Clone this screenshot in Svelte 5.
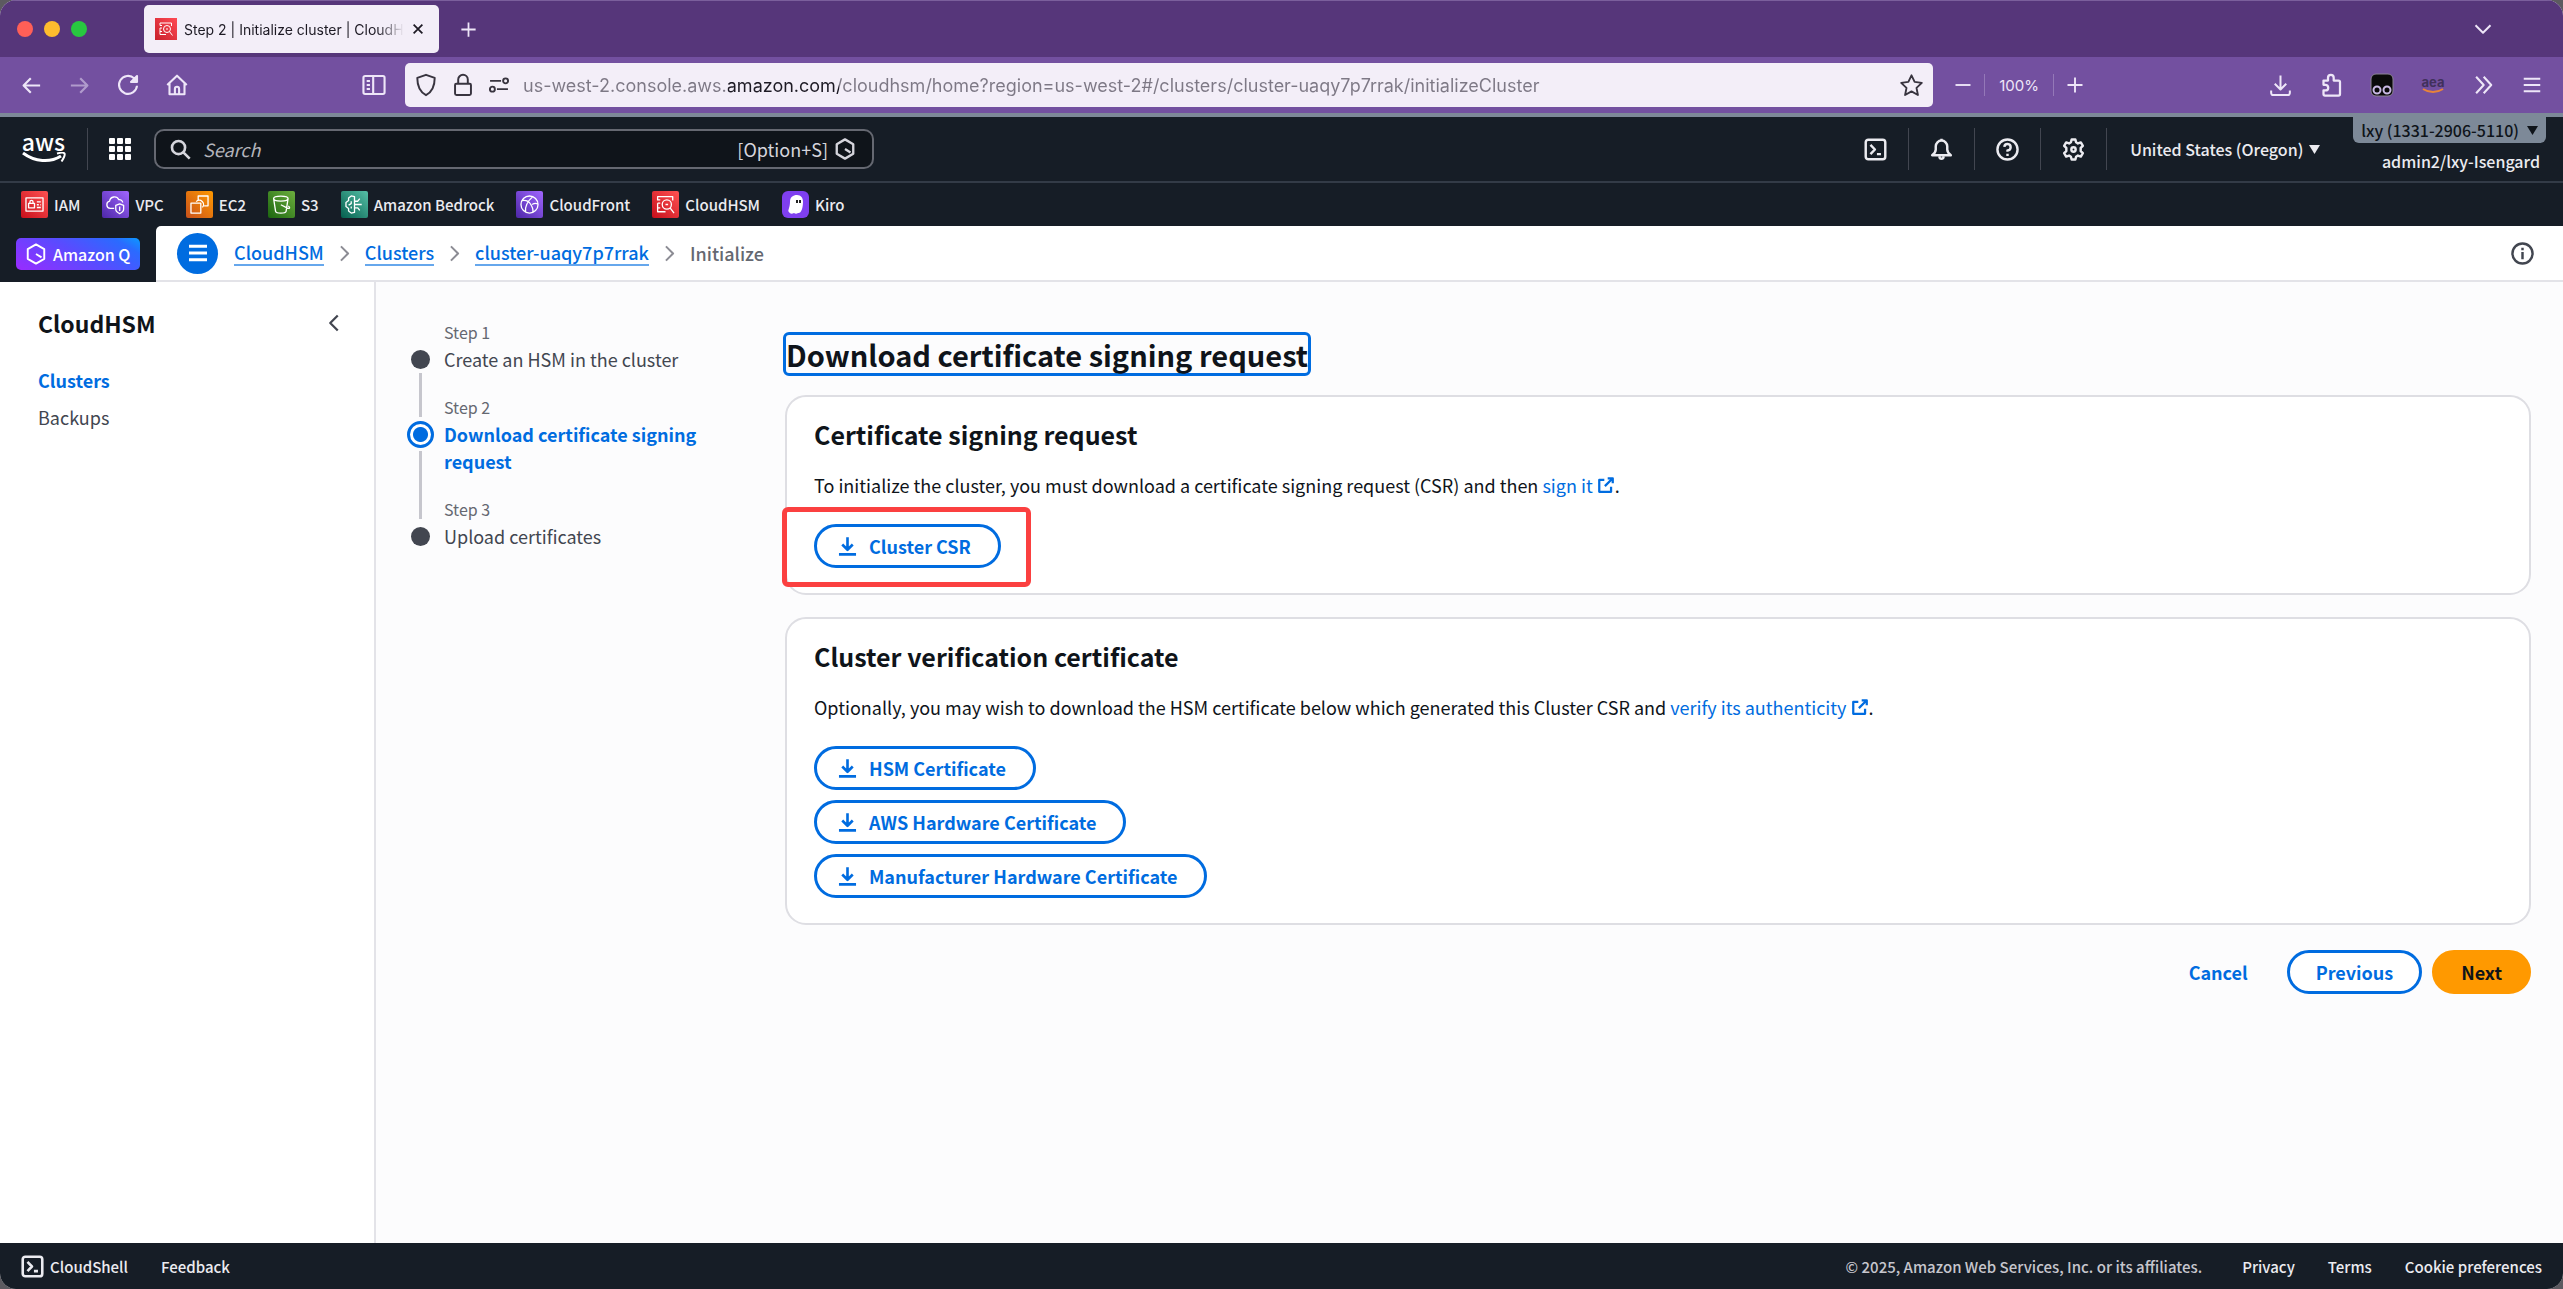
<script lang="ts">
	let address = $state(
		'us-west-2.console.aws.amazon.com/cloudhsm/home?region=us-west-2#/clusters/cluster-uaqy7p7rrak/initializeCluster'
	);
	let query = $state('');

	// 16x16 stroke icons
	const icons: Record<string, string> = {
		close: 'M3 3l10 10M13 3L3 13',
		plus: 'M8 2v12M2 8h12',
		minus: 'M2 8h12',
		chevronDown: 'M3 5.5l5 5 5-5',
		chevronRight: 'M5 2l6 6-6 6',
		chevronLeft: 'M11 2L5 8l6 6',
		back: 'M14 8H2.5M7.5 3l-5 5 5 5',
		forward: 'M2 8h11.5M8.5 3l5 5-5 5',
		reload: 'M14 8.5A6 6 0 1 1 12.2 3.6l1.4 1.2M14 2v4h-4zM13 3.5v1.8h-1.5',
		home: 'M1.5 8L8 1.8 14.5 8M3 7v7.2h10V7M6.6 14v-3.4a1.4 1.4 0 0 1 2.8 0V14',
		sidebar: 'M2.5 2.5h11a1 1 0 0 1 1 1v9a1 1 0 0 1-1 1h-11a1 1 0 0 1-1-1v-9a1 1 0 0 1 1-1zM7.5 2.5v11M3.5 5.5h2M3.5 8h2M3.5 10.5h2',
		shield: 'M8 1.2l5.8 2.1c0 5.2-1.6 9.2-5.8 11.5C3.8 12.5 2.2 8.5 2.2 3.3z',
		lock: 'M3.5 7.2h9a.8.8 0 0 1 .8.8v5.6a1 1 0 0 1-1 1H3.7a1 1 0 0 1-1-1V8a.8.8 0 0 1 .8-.8zM4.8 7V4.4a3.2 3.2 0 0 1 6.4 0V7',
		tune: 'M1.5 5h8M12.8 6.8a1.8 1.8 0 1 0 0-3.6 1.8 1.8 0 0 0 0 3.6zM14.5 11h-8M3.2 12.8a1.8 1.8 0 1 0 0-3.6 1.8 1.8 0 0 0 0 3.6z',
		star: 'M8 1.5l2 4.2 4.6.6-3.4 3.2.9 4.6L8 11.8l-4.1 2.3.9-4.6L1.4 6.3 6 5.7z',
		tray: 'M8 1v9.5M4 6.8l4 4 4-4M1.5 11.5v1.8a1.3 1.3 0 0 0 1.3 1.3h10.4a1.3 1.3 0 0 0 1.3-1.3v-1.8',
		puzzle: 'M3 5h3V3.2a1.9 1.9 0 0 1 3.8 0V5H13a1 1 0 0 1 1 1v8a1 1 0 0 1-1 1H4a1 1 0 0 1-1-1v-2.4h1.3a1.8 1.8 0 0 0 0-3.7H3z',
		more: 'M3 2l5.5 6L3 14M8.5 2L14 8l-5.5 6',
		menu: 'M2 3.5h12M2 8h12M2 12.5h12',
		search: 'M6.5 11.5a5 5 0 1 0 0-10 5 5 0 0 0 0 10zM10.2 10.2L15 15',
		hexagon: 'M8 1l6 3.5v7L8 15l-6-3.5v-7zM8 8l4 2.5',
		shell: 'M3 1.2h10A1.8 1.8 0 0 1 14.8 3v10a1.8 1.8 0 0 1-1.8 1.8H3A1.8 1.8 0 0 1 1.2 13V3A1.8 1.8 0 0 1 3 1.2zM4.5 4.8L7.6 8l-3.1 3.2M9 11.2h2.8',
		bell: 'M1.5 12h13c-1.6-1.2-2.5-2.300-2.500-4V5.800a4 4 0 0 0-8 0V8c0 1.700-.9 2.800-2.500 4zM8 1.800V.5M6.500 13c.3 2 2.700 2 3 0',
		help: 'M8 15A7 7 0 1 0 8 1a7 7 0 0 0 0 14zM5.8 6.2A2.2 2.2 0 1 1 8 8.6v1M8 11v1.5',
		gear: 'M6.7 1h2.6l.5 2 1.3.8 2-.7 1.4 2.3L13 6.9v2.2l1.5 1.5-1.4 2.3-2-.7-1.3.8-.5 2H6.7l-.5-2-1.3-.8-2 .7-1.4-2.3L3 9.1V6.9L1.5 5.4l1.4-2.3 2 .7L6.2 3zM8 9.500a1.500 1.500 0 1 0 0-3 1.500 1.500 0 0 0 0 3z',
		info: 'M8 15A7 7 0 1 0 8 1a7 7 0 0 0 0 14zM8 7v5M8 4v1.7',
		download: 'M8 1v9M4 6.5l4 4 4-4M1.5 14h13',
		external: 'M9.5 2H14v4.5M14 2L7 9M6.5 3.5H2V14h10.5V9.5',
		iam: 'M1.5 3h13v10h-13zM6 10.5H3.5V7.2H8v3.3H6M4.5 7V6a1.2 1.2 0 0 1 2.4 0v1M9.8 6h3M9.8 8.2h1.5M12.5 8.2h.5M9.8 10.3h3',
		vpc: 'M7 11H4a2.8 2.8 0 0 1-.5-5.5 3.7 3.7 0 0 1 7-1.2 2.6 2.6 0 0 1 3 2.2M11.2 7.5l3 1.2v3c0 1.5-1.5 2.6-3 3.3-1.5-.7-3-1.8-3-3.3v-3zM11.2 9.5V13',
		ec2: 'M1.5 7H9v7.5H1.5zM7 4.5v-3h7.5V9h-3M5.5 5.8a3.2 3.2 0 1 1 4.7 4.4',
		s3: 'M2 3.5c0-2.6 11-2.6 11 0s-11 2.6-11 0zM2 3.5l1.5 9.7c.5 1.8 7.5 1.8 8 0L13 3.5M7.5 8.2l5 2.5c1.5.6 2.5-.2.7-1.5',
		bedrock: 'M8 2l-2.5-.5-2 1.5v2l-2 1.5v3l2 1.5v2l2 1.5L8 14zM8 5.5h2.5l1.5-2M8 8h5.5M8 10.5h2.5l1.5 2M5.5 5.5v1.8l-2 1.2M5.5 11V9.5',
		cloudfront: 'M8 14.5a6.5 6.5 0 1 0 0-13 6.5 6.5 0 0 0 0 13zM2.5 5c3-.5 5 .5 6.5 3s2 4 1.5 6M5 13.5C4.5 9.5 6 6 10.5 2M10 8c1.5-1 3-1 4.3-.5',
		hsm: 'M13.5 5V2H2v2.5h2M2 7v6.5h6M2 7h2M9 11.5a3.5 3.5 0 1 0 0-7 3.5 3.5 0 0 0 0 7zM8 8h2M11.5 10.5l3 4M2 10.5h2'
	};

	const services = [
		{ name: 'IAM', icon: 'iam', tone: 'red' },
		{ name: 'VPC', icon: 'vpc', tone: 'purple' },
		{ name: 'EC2', icon: 'ec2', tone: 'orange' },
		{ name: 'S3', icon: 's3', tone: 'green' },
		{ name: 'Amazon Bedrock', icon: 'bedrock', tone: 'teal' },
		{ name: 'CloudFront', icon: 'cloudfront', tone: 'purple' },
		{ name: 'CloudHSM', icon: 'hsm', tone: 'red' },
		{ name: 'Kiro', icon: 'ghost', tone: 'kiro' }
	];

	const crumbs = ['CloudHSM', 'Clusters', 'cluster-uaqy7p7rrak'];

	const steps = ['Create an HSM in the cluster', 'Download certificate signing request', 'Upload certificates'];
	const current = 1;

	const certificates = ['HSM Certificate', 'AWS Hardware Certificate', 'Manufacturer Hardware Certificate'];
</script>

{#snippet icon(name: string, size = 22, weight = 2)}
	<svg
		class="icon"
		width={size}
		height={size}
		viewBox="0 0 16 16"
		fill="none"
		stroke="currentColor"
		stroke-width={weight}
		stroke-linejoin="round"
		aria-hidden="true"
	>
		<path d={icons[name]} />
	</svg>
{/snippet}

{#snippet caret()}
	<svg class="icon" width="11" height="11" viewBox="0 0 11 11" aria-hidden="true"><path d="M0 1h11L5.5 10z" fill="currentColor" /></svg>
{/snippet}

<div class="window">
	<header class="browser">
		<div class="tabs">
			<div class="lights"><i class="stop"></i><i class="hide"></i><i class="grow"></i></div>
			<div class="tab">
				<span class="favicon">{@render icon('hsm', 16, 1)}</span>
				<span class="tab-title">Step 2 | Initialize cluster | CloudH</span>
				<button aria-label="Close tab">{@render icon('close', 14, 2)}</button>
			</div>
			<button aria-label="New tab">{@render icon('plus', 19, 1.5)}</button>
			<button class="all-tabs" aria-label="List all tabs">{@render icon('chevronDown', 24, 1.3)}</button>
		</div>
		<div class="toolbar">
			<div class="history">
				<button aria-label="Back">{@render icon('back', 23, 1.5)}</button>
				<button class="faded" aria-label="Forward">{@render icon('forward', 23, 1.5)}</button>
				<button aria-label="Reload">{@render icon('reload', 24, 1.4)}</button>
				<button aria-label="Home">{@render icon('home', 24, 1.4)}</button>
			</div>
			<button aria-label="Sidebar">{@render icon('sidebar', 26, 1.3)}</button>
			<div class="address">
				{@render icon('shield', 24, 1.3)}
				{@render icon('lock', 24, 1.3)}
				{@render icon('tune', 22, 1.4)}
				<input type="text" aria-label="Address" bind:value={address} />
				<button aria-label="Bookmark">{@render icon('star', 25, 1.2)}</button>
			</div>
			<div class="zoom">
				<button aria-label="Zoom out">{@render icon('minus', 20, 1.5)}</button>
				<button class="zoom-level">100%</button>
				<button aria-label="Zoom in">{@render icon('plus', 20, 1.5)}</button>
			</div>
			<div class="extensions">
				<button aria-label="Downloads">{@render icon('tray', 23, 1.4)}</button>
				<button aria-label="Extensions">{@render icon('puzzle', 24, 1.5)}</button>
				<button aria-label="Tampermonkey">
					<svg class="icon" width="24" height="24" viewBox="0 0 24 24">
						<rect x="1" y="1" width="22" height="22" rx="5" fill="#0a0a0a" stroke="#8c8494" />
						<circle cx="7" cy="17" r="3.5" fill="#0a0a0a" stroke="#c9b9e4" stroke-width="2" />
						<circle cx="17" cy="17" r="3.5" fill="#0a0a0a" stroke="#c9b9e4" stroke-width="2" />
					</svg>
				</button>
				<button class="aea" aria-label="aea">
					<span>aea</span>
					<svg width="22" height="6" viewBox="0 0 22 6"><path d="M1 1c6 4 14 4 20 0" fill="none" stroke="#e8833a" stroke-width="2" /></svg>
				</button>
				<button aria-label="More tools">{@render icon('more', 22, 1.5)}</button>
				<button aria-label="Application menu">{@render icon('menu', 22, 1.4)}</button>
			</div>
		</div>
	</header>

	<div class="console-nav">
		<a href="#home" class="logo" aria-label="AWS home">
			<span>aws</span>
			<svg width="44" height="12" viewBox="0 0 44 12">
				<path d="M1 1c12 9 27 10 38 3" fill="none" stroke="#fff" stroke-width="3" />
				<path d="M35 1.5c4-1 7-1 7.5 0s-1 5-3 8" fill="none" stroke="#fff" stroke-width="2" />
			</svg>
		</a>
		<button class="apps" aria-label="Services">
			<svg class="icon" width="22" height="22" viewBox="0 0 22 22" fill="#fff">
				{#each [0, 8, 16] as y}
					{#each [0, 8, 16] as x}
						<rect {x} {y} width="6" height="6" rx="1" />
					{/each}
				{/each}
			</svg>
		</button>
		<label class="search">
			{@render icon('search', 21, 2)}
			<input type="text" placeholder="Search" aria-label="Search" bind:value={query} />
			<span>[Option+S]</span>
			{@render icon('hexagon', 22, 1.7)}
		</label>
		<div class="tools">
			<button aria-label="CloudShell">{@render icon('shell', 23, 1.7)}</button>
			<button aria-label="Notifications">{@render icon('bell', 23, 1.7)}</button>
			<button aria-label="Support">{@render icon('help', 23, 1.7)}</button>
			<button aria-label="Settings">{@render icon('gear', 23, 1.7)}</button>
			<button class="region">United States (Oregon) {@render caret()}</button>
		</div>
		<div class="account">
			<button>lxy (1331-2906-5110) {@render caret()}</button>
			<span>admin2/lxy-Isengard</span>
		</div>
	</div>

	<nav class="favorites" aria-label="Favorites">
		{#each services as service}
			<a href="#{service.icon}">
				<span class="badge {service.tone}">
					{#if service.icon === 'ghost'}
						<svg class="icon" width="19" height="21" viewBox="0 0 19 21">
							<path d="M4 8C4 3 7 1 11 1s6 3 6 7c0 6-2 12-5 11-1 1-3 1-4 0-2 1-4 1-5-1-2-1 1-4 1-10z" fill="#fff" />
							<path d="M11 6v3M14 6v3" stroke="#222" stroke-width="2" />
						</svg>
					{:else}
						{@render icon(service.icon, 21, 1)}
					{/if}
				</span>
				{service.name}
			</a>
		{/each}
	</nav>

	<div class="crumb-row">
		<div class="q-slot">
			<button class="amazon-q">{@render icon('hexagon', 22, 1.4)} Amazon Q</button>
		</div>
		<div class="crumb-bar">
			<button class="drawer" aria-label="Toggle navigation">{@render icon('menu', 24, 2)}</button>
			<nav class="crumbs" aria-label="Breadcrumbs">
				{#each crumbs as crumb}
					<a href="#{crumb}">{crumb}</a>
					{@render icon('chevronRight', 19, 1.7)}
				{/each}
				<span>Initialize</span>
			</nav>
			<button class="info" aria-label="Info">{@render icon('info', 23, 1.7)}</button>
		</div>
	</div>

	<div class="body">
		<aside>
			<div class="aside-head">
				<h2>CloudHSM</h2>
				<button aria-label="Close navigation">{@render icon('chevronLeft', 20, 1.8)}</button>
			</div>
			<a href="#clusters" class="selected">Clusters</a>
			<a href="#backups">Backups</a>
		</aside>

		<main>
			<ol class="steps">
				{#each steps as step, i}
					<li class:active={i === current}>
						<div class="track">
							<span class="line above" class:blank={i === 0}></span>
							<span class="dot"></span>
							<span class="line" class:blank={i === steps.length - 1}></span>
						</div>
						<div class="step-text">
							<small>Step {i + 1}</small>
							<span>{step}</span>
						</div>
					</li>
				{/each}
			</ol>

			<div class="content">
				<h1>Download certificate signing request</h1>

				<section>
					<h2>Certificate signing request</h2>
					<p>
						To initialize the cluster, you must download a certificate signing request (CSR) and then
						<a href="#sign">sign it {@render icon('external', 18, 2)}</a>.
					</p>
					<div class="marked">
						<button class="btn">{@render icon('download', 21, 2)} Cluster CSR</button>
					</div>
				</section>

				<section>
					<h2>Cluster verification certificate</h2>
					<p>
						Optionally, you may wish to download the HSM certificate below which generated this Cluster CSR and
						<a href="#verify">verify its authenticity {@render icon('external', 18, 2)}</a>.
					</p>
					<div class="stack">
						{#each certificates as certificate}
							<button class="btn">{@render icon('download', 21, 2)} {certificate}</button>
						{/each}
					</div>
				</section>

				<div class="actions">
					<button class="btn plain">Cancel</button>
					<button class="btn">Previous</button>
					<button class="btn primary">Next</button>
				</div>
			</div>
		</main>
	</div>

	<footer>
		<button>{@render icon('shell', 23, 1.8)} CloudShell</button>
		<a href="#feedback">Feedback</a>
		<span class="legal">© 2025, Amazon Web Services, Inc. or its affiliates.</span>
		<a href="#privacy">Privacy</a>
		<a href="#terms">Terms</a>
		<a href="#cookies">Cookie preferences</a>
	</footer>
</div>

<style>
	:global(body) {
		background: #5c5a60;
	}

	.window {
		--blue: #006ce0;
		--ink: #161d26;
		--console: 'Noto Sans CJK SC', 'Noto Sans', sans-serif;
		display: flex;
		flex-direction: column;
		min-height: 100vh;
		border-radius: 16px;
		overflow: hidden;
		background: #fff;
		color: #0f141a;
		font-family: var(--console);
		font-size: 18px;
		line-height: 27px;
	}

	.window :global(*) {
		box-sizing: border-box;
	}

	.icon {
		display: block;
		flex: none;
	}

	button {
		display: flex;
		align-items: center;
		padding: 0;
		border: 0;
		background: none;
		color: inherit;
		font: inherit;
		white-space: nowrap;
		cursor: pointer;
	}

	input {
		min-width: 0;
		flex: 1;
		padding: 0;
		border: 0;
		outline: 0;
		background: none;
		color: inherit;
		font: inherit;
	}

	a {
		color: inherit;
		text-decoration: none;
	}

	h1,
	h2,
	p,
	ol {
		margin: 0;
		padding: 0;
	}

	/* browser chrome */
	.browser {
		color: #eee6f8;
		font-family: Inter, sans-serif;
	}

	.tabs {
		display: flex;
		align-items: center;
		height: 57px;
		padding: 0 68px 0 17px;
		border-top: 1px solid #7b5f9c;
		background: #56367a;
	}

	.lights {
		display: flex;
		gap: 11px;
		width: 127px;
	}

	.lights i {
		width: 16px;
		height: 16px;
		border-radius: 50%;
	}

	.stop {
		background: #ff5f57;
	}

	.hide {
		background: #febc2e;
	}

	.grow {
		background: #28c840;
	}

	.tab {
		display: flex;
		align-items: center;
		gap: 7px;
		width: 295px;
		height: 48px;
		margin-right: 20px;
		padding: 0 14px 0 11px;
		border-radius: 5px;
		background: #f3eef8;
		color: #1d1a24;
		font-size: 14px;
	}

	.favicon {
		display: grid;
		place-items: center;
		flex: none;
		width: 22px;
		height: 22px;
		background: linear-gradient(45deg, #c8202c, #ff4a54);
		color: #fff;
	}

	.tab-title {
		flex: 1;
		white-space: nowrap;
		mask-image: linear-gradient(to right, #000 88%, transparent);
	}

	.all-tabs {
		margin-left: auto;
	}

	.toolbar {
		display: flex;
		align-items: center;
		height: 56px;
		padding: 0 20px;
		background: #7350a0;
	}

	.history {
		display: flex;
		gap: 25px;
		width: 341px;
	}

	.faded {
		opacity: 0.5;
	}

	.address {
		display: flex;
		align-items: center;
		flex: 1;
		gap: 13px;
		height: 44px;
		margin: 0 20px 0 18px;
		padding: 0 9px;
		border-radius: 5px;
		background: #f3eef8;
		color: #38343f;
		font-size: 18px;
	}

	/* the registered domain is darker than the rest of the address */
	.address input {
		background: linear-gradient(to right, #7d7885 205px, #1d1a24 205px 316px, #7d7885 316px);
		background-clip: text;
		color: transparent;
	}

	.zoom {
		display: flex;
		align-items: center;
		gap: 11px;
		font-size: 15px;
	}

	.zoom-level {
		height: 22px;
		padding: 0 14px;
		border: solid #9478b8;
		border-width: 0 1px;
	}

	.extensions {
		display: flex;
		align-items: center;
		gap: 27px;
		margin-left: 184px;
	}

	.aea {
		flex-direction: column;
		width: 24px;
		color: #40305c;
		font-size: 13px;
		font-weight: 700;
		line-height: 12px;
	}

	/* console header */
	.console-nav {
		display: flex;
		align-items: center;
		height: 70px;
		border-top: 4px solid #7d8998;
		border-bottom: 2px solid #333b47;
		background: var(--ink);
		color: #ebebf0;
		font-size: 16px;
		font-weight: 500;
	}

	.logo {
		display: flex;
		flex-direction: column;
		align-items: center;
		width: 88px;
		height: 42px;
		padding-top: 3px;
		border-right: 1px solid #424650;
		color: #fff;
		font-size: 23px;
		line-height: 21px;
	}

	.apps {
		padding: 0 23px 0 21px;
	}

	.search {
		display: flex;
		align-items: center;
		gap: 12px;
		width: 720px;
		height: 40px;
		padding: 0 16px 0 14px;
		border: 2px solid #656871;
		border-radius: 10px;
		background: #0f141a;
		color: #d5d5dc;
		font-size: 18px;
		font-weight: 400;
	}

	.search span {
		margin-right: -6px;
	}

	.search input::placeholder {
		color: #b4b4bb;
		font-style: italic;
		opacity: 1;
	}

	.tools {
		display: flex;
		align-items: center;
		margin-left: auto;
	}

	.tools button {
		height: 42px;
		padding: 0 21px;
		border-right: 1px solid #424650;
	}

	.tools .region {
		gap: 6px;
		padding: 0 33px 0 23px;
		border: 0;
	}

	.account {
		display: flex;
		flex-direction: column;
		align-items: flex-end;
		align-self: flex-start;
		gap: 5px;
		padding-right: 17px;
	}

	.account button {
		gap: 8px;
		height: 26px;
		padding: 0 8px;
		border-radius: 0 0 6px 6px;
		background: #7d8998;
		color: #0f141a;
	}

	.account span {
		padding-right: 6px;
	}

	.favorites {
		display: flex;
		align-items: center;
		gap: 22px;
		height: 43px;
		padding: 0 21px;
		background: var(--ink);
		color: #ebebf0;
		font-size: 15px;
		font-weight: 500;
	}

	.favorites a {
		display: flex;
		align-items: center;
		gap: 6px;
	}

	.badge {
		display: grid;
		place-items: center;
		width: 27px;
		height: 27px;
		border-radius: 2px;
		color: #fff;
	}

	.red {
		background: linear-gradient(45deg, #c70f1b, #ff5252);
	}

	.purple {
		background: linear-gradient(45deg, #4d27a8, #a166ff);
	}

	.orange {
		background: linear-gradient(45deg, #c8511b, #ff9900);
	}

	.green {
		background: linear-gradient(45deg, #1b660f, #6cae3e);
	}

	.teal {
		background: linear-gradient(45deg, #055f4e, #56c0a7);
	}

	.kiro {
		border-radius: 6px;
		background: #7f3ff0;
	}

	.crumb-row {
		display: flex;
		height: 56px;
		background: var(--ink);
	}

	.q-slot {
		display: flex;
		align-items: center;
		width: 156px;
		padding-left: 16px;
	}

	.amazon-q {
		gap: 6px;
		height: 32px;
		padding: 0 10px 0 9px;
		border-radius: 5px;
		background: linear-gradient(30deg, #9a2bff, #5a4bff 50%, #2a6bff 85%, #0a9bff);
		color: #fff;
		font-size: 16px;
		font-weight: 500;
	}

	.crumb-bar {
		display: flex;
		align-items: center;
		flex: 1;
		padding: 0 29px 0 21px;
		border-bottom: 2px solid #e3e3e8;
		border-top-left-radius: 5px;
		background: #fff;
	}

	.drawer {
		justify-content: center;
		width: 41px;
		height: 41px;
		border-radius: 50%;
		background: var(--blue);
		color: #fff;
	}

	.crumbs {
		display: flex;
		align-items: center;
		gap: 11px;
		margin-left: 16px;
		color: #8c8c94;
	}

	.crumbs a {
		border-bottom: 2px solid #66a7ec;
		color: var(--blue);
		font-weight: 500;
		line-height: 23px;
	}

	.crumbs span {
		color: #656871;
		font-weight: 500;
	}

	.info {
		margin-left: auto;
		color: #424650;
	}

	/* page */
	.body {
		display: flex;
		flex: 1;
	}

	aside {
		display: flex;
		flex-direction: column;
		gap: 10px;
		width: 376px;
		padding: 25px 30px 0 38px;
		border-right: 2px solid #e3e3e8;
		color: #424650;
	}

	.aside-head {
		display: flex;
		align-items: center;
		justify-content: space-between;
		margin-bottom: 18px;
	}

	h2 {
		color: #0f141a;
		font-size: 25px;
		line-height: 32px;
	}

	.aside-head h2 {
		font-size: 23px;
	}

	.selected {
		color: var(--blue);
		font-weight: 700;
	}

	main {
		display: grid;
		grid-template-columns: 338px 1fr;
		gap: 40px;
		flex: 1;
		padding: 0 32px 0 31px;
		background: #fcfcfd;
	}

	.steps {
		padding-top: 36px;
		list-style: none;
		color: #424650;
	}

	.steps li {
		display: flex;
		gap: 10px;
	}

	.track {
		display: flex;
		flex-direction: column;
		align-items: center;
		width: 27px;
	}

	.line {
		flex: 1;
		width: 3px;
		background: #c6c6cd;
	}

	.above {
		flex: none;
		height: 24px;
		margin-bottom: 4px;
	}

	.blank {
		visibility: hidden;
	}

	.dot {
		width: 19px;
		height: 19px;
		margin: 4px 0;
		border-radius: 50%;
		background: #424650;
	}

	.active .dot {
		width: 27px;
		height: 27px;
		margin: 0 0 3px;
		border: 3px solid var(--blue);
		background: radial-gradient(circle, var(--blue) 7px, #fff 8px);
	}

	.step-text {
		flex: 1;
		display: flex;
		flex-direction: column;
		padding-bottom: 20px;
	}

	small {
		color: #656871;
		font-size: 16px;
		line-height: 28px;
	}

	.active .step-text span {
		color: var(--blue);
		font-weight: 700;
	}

	.content {
		display: flex;
		flex-direction: column;
		gap: 22px;
		padding-top: 50px;
	}

	h1 {
		align-self: flex-start;
		margin: 0 0 -3px -2px;
		border: 3px solid var(--blue);
		border-radius: 6px;
		font-size: 29px;
		line-height: 38px;
	}

	section {
		padding: 21px 27px 25px;
		border: 2px solid #dedee3;
		border-radius: 21px;
		background: #fff;
	}

	p {
		margin: 21px 0 25px;
		line-height: 28px;
	}

	p a {
		color: var(--blue);
	}

	p .icon {
		display: inline-block;
		vertical-align: -1px;
	}

	.btn {
		gap: 11px;
		width: fit-content;
		height: 44px;
		padding: 0 27px 0 20px;
		border: 3px solid var(--blue);
		border-radius: 22px;
		background: #fff;
		color: var(--blue);
		font-weight: 700;
	}

	.marked {
		position: relative;
		width: fit-content;
	}

	.marked::after {
		content: '';
		position: absolute;
		inset: -17px -30px -19px -32px;
		border: 5px solid #fb4040;
		border-radius: 6px;
		pointer-events: none;
	}

	.stack {
		display: flex;
		flex-direction: column;
		gap: 10px;
	}

	.actions {
		display: flex;
		justify-content: flex-end;
		gap: 10px;
		margin-top: 3px;
	}

	.actions .btn {
		padding: 0 26px;
	}

	.actions .plain {
		border-color: transparent;
		background: none;
	}

	.actions .primary {
		border-color: #ff9900;
		background: #ff9900;
		color: #0f141a;
	}

	footer {
		display: flex;
		align-items: center;
		gap: 33px;
		height: 46px;
		padding: 0 21px;
		background: var(--ink);
		color: #ebebf0;
		font-size: 15px;
		font-weight: 500;
	}

	footer button {
		gap: 6px;
	}

	.legal {
		margin-left: auto;
		padding-right: 7px;
		color: #c6c6cd;
	}
</style>
